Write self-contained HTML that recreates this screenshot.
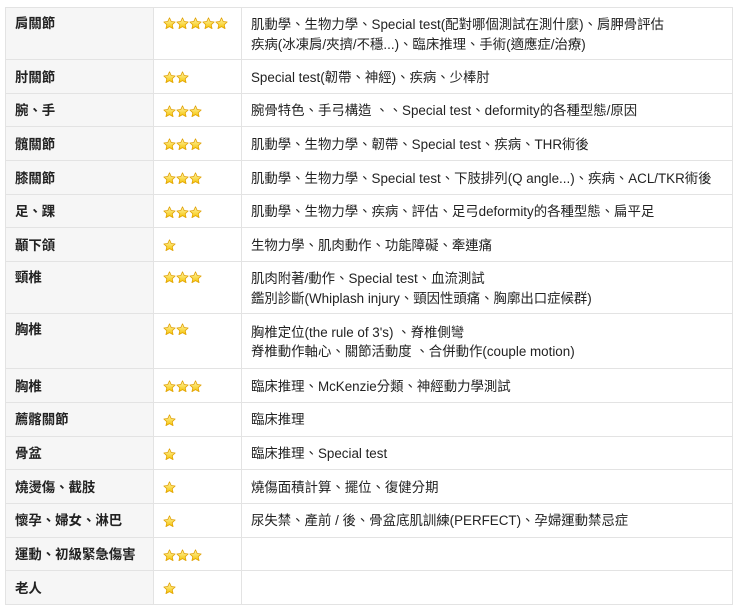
<!DOCTYPE html>
<html><head><meta charset="utf-8"><style>
body{margin:0;background:#fff;font-family:"Liberation Sans","Noto Sans CJK TC",sans-serif;font-size:13.4px;color:#222}
table{position:absolute;left:5px;top:7px;width:728px;border-collapse:collapse}
td{border:1px solid #e3e3e3;padding:2px 9px 0 9px;vertical-align:middle;line-height:19.5px;box-sizing:border-box}
td:first-child{background:#f6f6f6;font-weight:bold;width:148px;padding-left:9px}
td:nth-child(2){width:88px;padding-top:1px}
tr.t td:first-child,tr.t td:nth-child(2),tr.t2 td:first-child,tr.t2 td:nth-child(2){vertical-align:top;padding-top:6px}
tr.t td:nth-child(2),tr.t2 td:nth-child(2){padding-top:5px}
tr{height:33.7px}
tr.t{height:52px}
tr.t2{height:55px}
.s{display:inline-block;width:13px;height:13px;vertical-align:middle}
</style></head><body>
<svg width="0" height="0" style="position:absolute"><defs><linearGradient id="g" x1="0" y1="0" x2="0" y2="1"><stop offset="0" stop-color="#fff6b0"/><stop offset="1" stop-color="#f5c400"/></linearGradient><symbol id="st" viewBox="0 0 24 24"><path d="M12 1.5l3.2 6.9 7.3.8-5.5 5 1.6 7.3L12 17.8l-6.6 3.7 1.6-7.3-5.5-5 7.3-.8z" fill="url(#g)" stroke="#e0a000" stroke-width="1.4" stroke-linejoin="round"/></symbol></defs></svg>
<table>
<tr class="t"><td>肩關節</td><td><svg class="s"><use href="#st"/></svg><svg class="s"><use href="#st"/></svg><svg class="s"><use href="#st"/></svg><svg class="s"><use href="#st"/></svg><svg class="s"><use href="#st"/></svg></td><td>肌動學、生物力學、Special test(配對哪個測試在測什麼)、肩胛骨評估<br>疾病(冰凍肩/夾擠/不穩...)、臨床推理、手術(適應症/治療)</td></tr>
<tr><td>肘關節</td><td><svg class="s"><use href="#st"/></svg><svg class="s"><use href="#st"/></svg></td><td>Special test(韌帶、神經)、疾病、少棒肘</td></tr>
<tr><td>腕、手</td><td><svg class="s"><use href="#st"/></svg><svg class="s"><use href="#st"/></svg><svg class="s"><use href="#st"/></svg></td><td>腕骨特色、手弓構造 、、Special test、deformity的各種型態/原因</td></tr>
<tr><td>髖關節</td><td><svg class="s"><use href="#st"/></svg><svg class="s"><use href="#st"/></svg><svg class="s"><use href="#st"/></svg></td><td>肌動學、生物力學、韌帶、Special test、疾病、THR術後</td></tr>
<tr><td>膝關節</td><td><svg class="s"><use href="#st"/></svg><svg class="s"><use href="#st"/></svg><svg class="s"><use href="#st"/></svg></td><td>肌動學、生物力學、Special test、下肢排列(Q angle...)、疾病、ACL/TKR術後</td></tr>
<tr><td>足、踝</td><td><svg class="s"><use href="#st"/></svg><svg class="s"><use href="#st"/></svg><svg class="s"><use href="#st"/></svg></td><td>肌動學、生物力學、疾病、評估、足弓deformity的各種型態、扁平足</td></tr>
<tr><td>顳下頜</td><td><svg class="s"><use href="#st"/></svg></td><td>生物力學、肌肉動作、功能障礙、牽連痛</td></tr>
<tr class="t"><td>頸椎</td><td><svg class="s"><use href="#st"/></svg><svg class="s"><use href="#st"/></svg><svg class="s"><use href="#st"/></svg></td><td>肌肉附著/動作、Special test、血流測試<br>鑑別診斷(Whiplash injury、頸因性頭痛、胸廓出口症候群)</td></tr>
<tr class="t2"><td>胸椎</td><td><svg class="s"><use href="#st"/></svg><svg class="s"><use href="#st"/></svg></td><td>胸椎定位(the rule of 3's) 、脊椎側彎<br>脊椎動作軸心、關節活動度 、合併動作(couple motion)</td></tr>
<tr><td>胸椎</td><td><svg class="s"><use href="#st"/></svg><svg class="s"><use href="#st"/></svg><svg class="s"><use href="#st"/></svg></td><td>臨床推理、McKenzie分類、神經動力學測試</td></tr>
<tr><td>薦髂關節</td><td><svg class="s"><use href="#st"/></svg></td><td>臨床推理</td></tr>
<tr><td>骨盆</td><td><svg class="s"><use href="#st"/></svg></td><td>臨床推理、Special test</td></tr>
<tr><td>燒燙傷、截肢</td><td><svg class="s"><use href="#st"/></svg></td><td>燒傷面積計算、擺位、復健分期</td></tr>
<tr><td>懷孕、婦女、淋巴</td><td><svg class="s"><use href="#st"/></svg></td><td>尿失禁、產前 / 後、骨盆底肌訓練(PERFECT)、孕婦運動禁忌症</td></tr>
<tr><td>運動、初級緊急傷害</td><td><svg class="s"><use href="#st"/></svg><svg class="s"><use href="#st"/></svg><svg class="s"><use href="#st"/></svg></td><td></td></tr>
<tr><td>老人</td><td><svg class="s"><use href="#st"/></svg></td><td></td></tr>
</table>
</body></html>
